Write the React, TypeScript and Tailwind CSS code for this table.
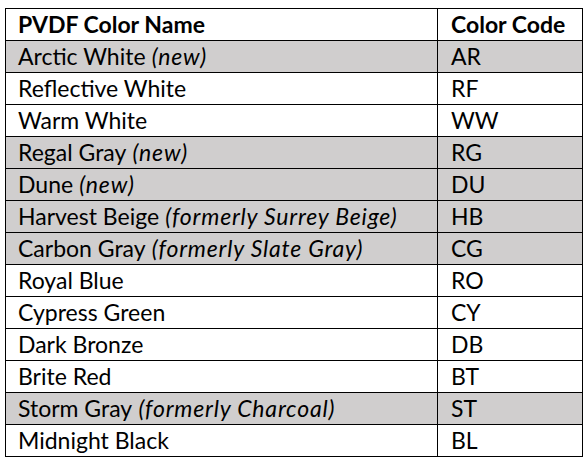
const rows: { name: string; note?: string; code: string; shaded?: boolean }[] = [
  { name: 'Arctic White', note: '(new)', code: 'AR', shaded: true },
  { name: 'Reflective White', code: 'RF' },
  { name: 'Warm White', code: 'WW' },
  { name: 'Regal Gray', note: '(new)', code: 'RG', shaded: true },
  { name: 'Dune', note: '(new)', code: 'DU', shaded: true },
  { name: 'Harvest Beige', note: '(formerly Surrey Beige)', code: 'HB', shaded: true },
  { name: 'Carbon Gray', note: '(formerly Slate Gray)', code: 'CG', shaded: true },
  { name: 'Royal Blue', code: 'RO' },
  { name: 'Cypress Green', code: 'CY' },
  { name: 'Dark Bronze', code: 'DB' },
  { name: 'Brite Red', code: 'BT' },
  { name: 'Storm Gray', note: '(formerly Charcoal)', code: 'ST', shaded: true },
  { name: 'Midnight Black', code: 'BL' },
];

export default function App() {
  return (
    <div className="w-[588px] h-[460px] bg-white pl-[5px] pt-[8px] font-['Lato','Liberation_Sans',sans-serif] text-[23px] text-black">
      <div className="w-[578px] border-l border-t border-black">
        <div className="grid grid-cols-[432px_145px]">
          <div className="h-[32px] border-r border-b border-black flex items-center pl-[12px] font-bold">
            PVDF Color Name
          </div>
          <div className="h-[32px] border-r border-b border-black flex items-center pl-[13px] font-bold">
            Color Code
          </div>
        </div>
        {rows.map((r) => (
          <div
            key={r.code}
            className={`grid grid-cols-[432px_145px] ${r.shaded ? 'bg-[#d0cece]' : 'bg-white'}`}
          >
            <div className="h-[32px] border-r border-b border-black flex items-center pl-[12px] whitespace-pre">
              {r.name}
              {r.note && <span className="italic tracking-[0.8px]"> {r.note}</span>}
            </div>
            <div className="h-[32px] border-r border-b border-black flex items-center pl-[13px]">
              {r.code}
            </div>
          </div>
        ))}
      </div>
    </div>
  );
}
